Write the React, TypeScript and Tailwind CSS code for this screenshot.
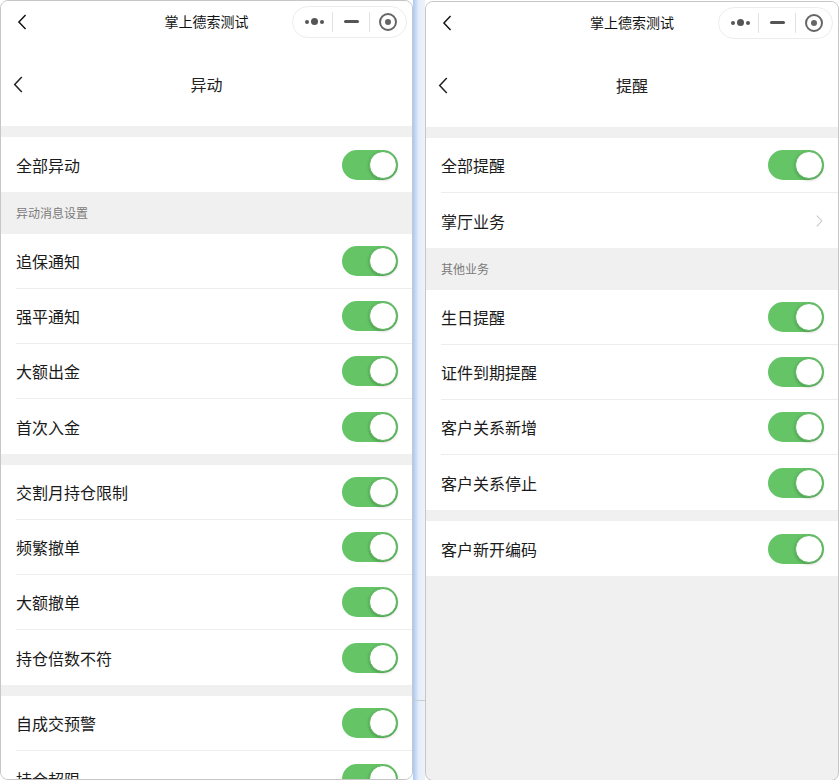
import React from "react"

const font = { fontFamily: '"Noto Sans CJK SC", "Noto Sans", sans-serif' }

function Toggle() {
  return (
    <div className="w-[56px] h-[30px] rounded-full bg-[#64c466] flex items-center justify-end pr-[1px]">
      <div className="w-[28px] h-[28px] rounded-full bg-white border border-[#5cb85e] shadow-[0_1px_3px_rgba(0,0,0,0.25)]" />
    </div>
  )
}

function Chevron({ className = "", right = false }: { className?: string; right?: boolean }) {
  return (
    <svg width="10" height="18" viewBox="0 0 10 18" className={className}>
      <path d={right ? "M1 1 L8.5 9 L1 17" : "M9 1 L1.5 9 L9 17"} fill="none" stroke="currentColor" strokeWidth="1.6" />
    </svg>
  )
}

function Capsule() {
  return (
    <div className="w-[115px] h-[32px] rounded-full border border-[#ececec] bg-white flex items-center">
      <div className="w-[39px] flex items-center justify-center gap-[2px] pl-[4px]">
        <span className="w-[4px] h-[4px] rounded-full bg-[#555]" />
        <span className="w-[7px] h-[7px] rounded-full bg-[#555]" />
        <span className="w-[4px] h-[4px] rounded-full bg-[#555]" />
      </div>
      <div className="w-px h-[20px] bg-[#e2e2e2]" />
      <div className="w-[36px] flex items-center justify-center">
        <span className="w-[15px] h-[3px] bg-[#555] rounded-sm" />
      </div>
      <div className="w-px h-[20px] bg-[#e2e2e2]" />
      <div className="flex-1 flex items-center justify-center">
        <span className="w-[18px] h-[18px] rounded-full border-2 border-[#666] flex items-center justify-center">
          <span className="w-[6px] h-[6px] rounded-full bg-[#666]" />
        </span>
      </div>
    </div>
  )
}

type Item = { label: string; arrow?: boolean }
type Block = { kind: "gap" } | { kind: "section"; label: string } | { kind: "rows"; items: Item[] }

function Row({ item, last }: { item: Item; last: boolean }) {
  return (
    <div className="pl-[15px] bg-white">
      <div className={`h-[55px] flex items-center justify-between pr-[14px] ${last ? "" : "border-b border-[#ededed]"}`}>
        <span className="text-[16px] text-[#1a1a1a]">{item.label}</span>
        {item.arrow ? <Chevron right className="text-[#c8c8c8] w-[7px] h-[12px] mr-[1px]" /> : <Toggle />}
      </div>
    </div>
  )
}

function Phone({ title, blocks, className = "" }: { title: string; blocks: Block[]; className?: string }) {
  return (
    <div className={`h-[780px] border border-[#c6c6c6] rounded-[8px] overflow-hidden bg-[#f0f0f0] flex flex-col ${className}`}>
      <div className="bg-white h-[41px] shrink-0 grid grid-cols-[1fr_auto_1fr] items-center pr-[5px]">
        <Chevron className="text-[#111] w-[10px] h-[16px] ml-4" />
        <span className="text-[14px] text-[#111] pl-[5px]">掌上德索测试</span>
        <div className="flex justify-end">
          <Capsule />
        </div>
      </div>
      <div className="bg-white h-[84px] shrink-0 grid grid-cols-[1fr_auto_1fr] items-center">
        <Chevron className="text-[#222] w-[10px] h-[17px] ml-[12px]" />
        <span className="text-[16px] text-[#222]">{title}</span>
        <div />
      </div>
      {blocks.map((b, i) => {
        if (b.kind === "gap") return <div key={i} className="h-[11px] shrink-0" />
        if (b.kind === "section")
          return (
            <div key={i} className="h-[42px] shrink-0 px-[15px] flex items-center text-[12px] text-[#7a7a7a]">
              {b.label}
            </div>
          )
        return (
          <div key={i} className="shrink-0">
            {b.items.map((it, j) => (
              <Row key={it.label} item={it} last={j === b.items.length - 1} />
            ))}
          </div>
        )
      })}
    </div>
  )
}

const left: Block[] = [
  { kind: "gap" },
  { kind: "rows", items: [{ label: "全部异动" }] },
  { kind: "section", label: "异动消息设置" },
  { kind: "rows", items: [{ label: "追保通知" }, { label: "强平通知" }, { label: "大额出金" }, { label: "首次入金" }] },
  { kind: "gap" },
  { kind: "rows", items: [{ label: "交割月持仓限制" }, { label: "频繁撤单" }, { label: "大额撤单" }, { label: "持仓倍数不符" }] },
  { kind: "gap" },
  { kind: "rows", items: [{ label: "自成交预警" }, { label: "持仓超限" }] },
]

const right: Block[] = [
  { kind: "gap" },
  { kind: "rows", items: [{ label: "全部提醒" }, { label: "掌厅业务", arrow: true }] },
  { kind: "section", label: "其他业务" },
  { kind: "rows", items: [{ label: "生日提醒" }, { label: "证件到期提醒" }, { label: "客户关系新增" }, { label: "客户关系停止" }] },
  { kind: "gap" },
  { kind: "rows", items: [{ label: "客户新开编码" }] },
]

export default function App() {
  return (
    <div className="w-[839px] h-[780px] flex bg-white overflow-hidden" style={font}>
      <Phone title="异动" blocks={left} className="w-[413px] shrink-0" />
      <div className="w-[12px] shrink-0 h-full flex flex-col bg-gradient-to-r from-[#a9c9f3] via-[#e6eefa] to-[#eef2f8]">
        <div className="h-[700px]" />
        <div className="h-px bg-[#c9ccd2]" />
      </div>
      <Phone title="提醒" blocks={right} className="w-[414px] shrink-0 mt-px h-[779px]" />
    </div>
  )
}
